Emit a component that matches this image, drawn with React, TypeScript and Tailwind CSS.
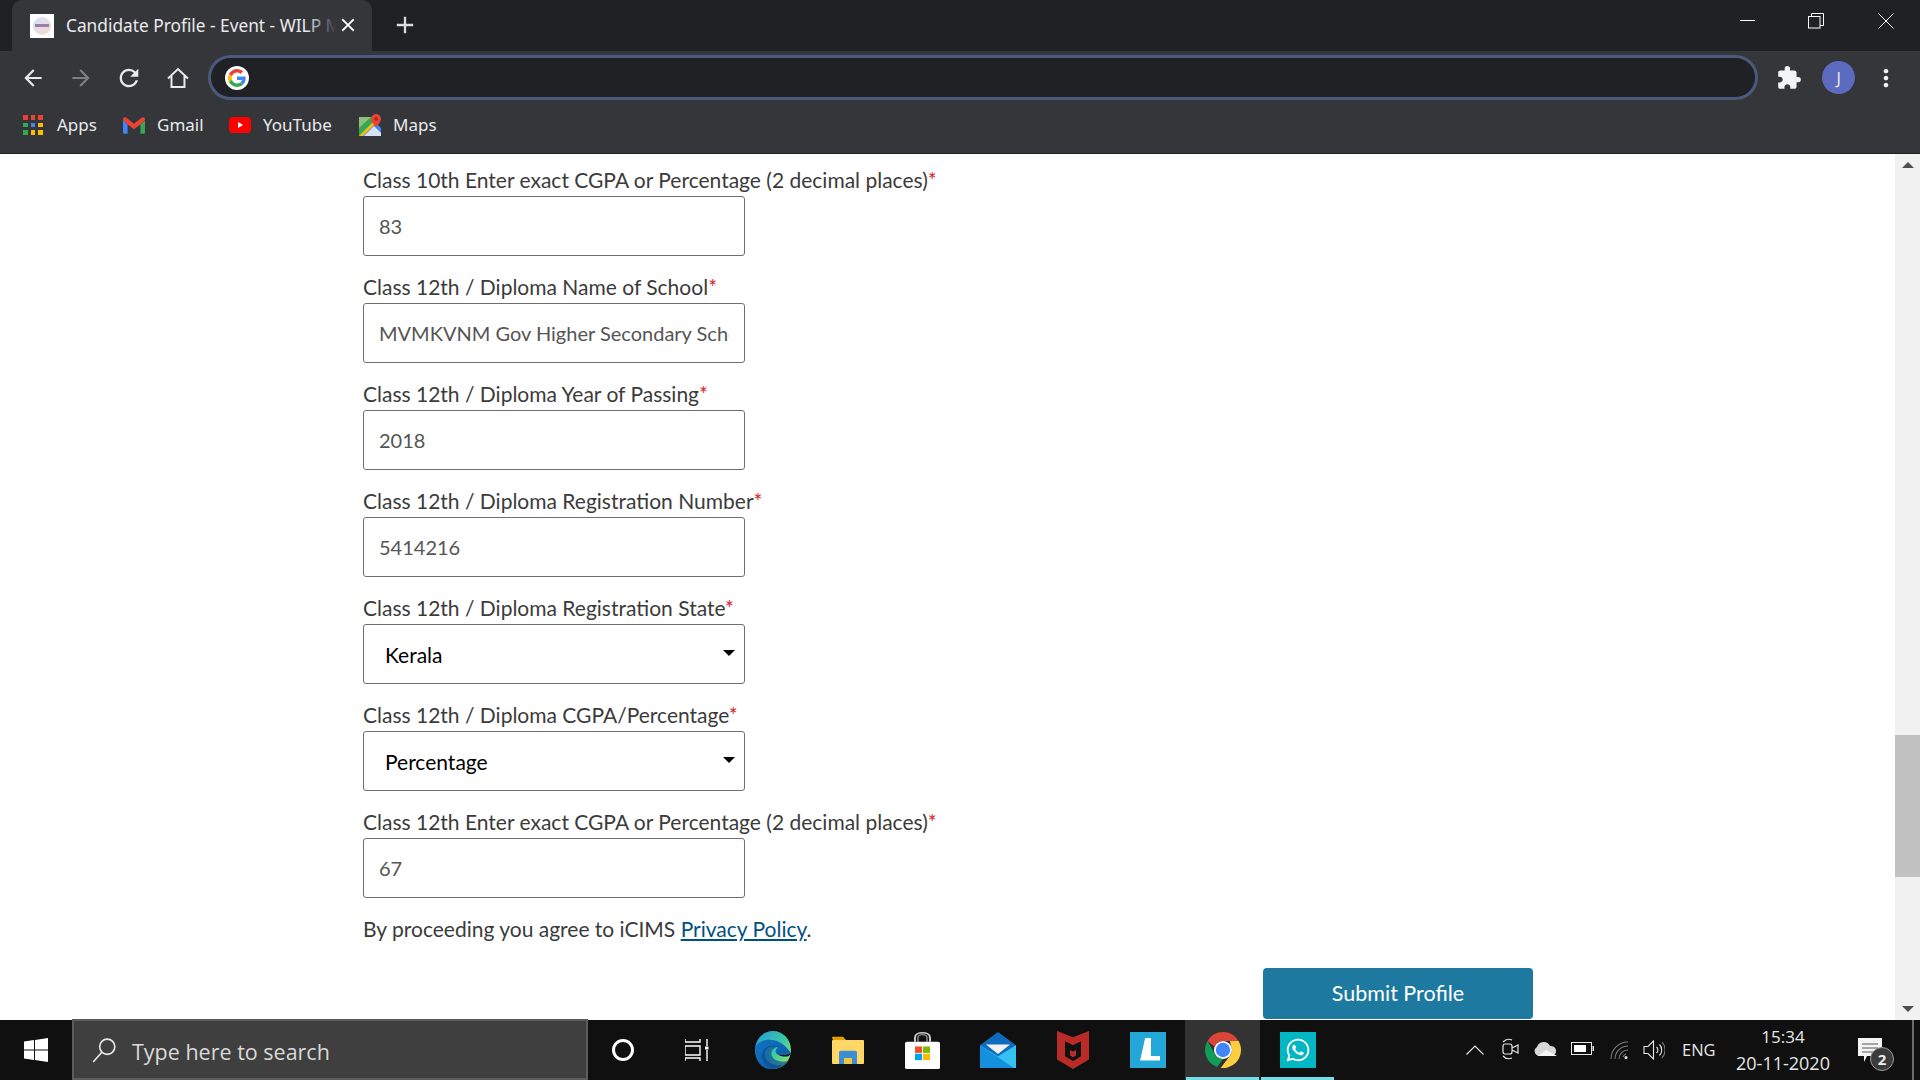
import React from "react";
import { MdArrowBack, MdArrowForward, MdRefresh, MdExtension, MdMoreVert, MdClose, MdAdd } from "react-icons/md";
import { FaWhatsapp } from "react-icons/fa";

const labelFont = "[font-family:Lato,'Liberation_Sans',sans-serif]";

function Google({ size }: { size: number }) {
  return (
    <span className="flex items-center justify-center rounded-full bg-white" style={{ width: size, height: size }}>
      <svg viewBox="0 0 48 48" width={size - 6} height={size - 6}>
        <path fill="#EA4335" d="M24 9.5c3.5 0 6.7 1.2 9.2 3.6l6.9-6.9C35.9 2.4 30.5 0 24 0 14.6 0 6.5 5.4 2.6 13.2l8 6.2C12.500 13.600 17.800 9.500 24 9.500z" />
        <path fill="#4285F4" d="M47 24.500c0-1.600-.1-3.100-.4-4.500H24v9h12.900c-.6 3-2.200 5.500-4.700 7.200l7.700 6C44.400 38.100 47 31.900 47 24.500z" />
        <path fill="#FBBC05" d="M10.500 28.600A14.500 14.500 0 0 1 10.500 19.400l-8-6.200A24 24 0 0 0 2.600 34.800l7.900-6.200z" />
        <path fill="#34A853" d="M24 48c6.500 0 11.900-2.100 15.900-5.800l-7.700-6c-2.100 1.400-4.900 2.300-8.200 2.300-6.200 0-11.500-4.100-13.500-9.900l-8 6.200C6.500 42.600 14.600 48 24 48z" />
      </svg>
    </span>
  );
}

function AppsIcon() {
  const colors = ["#ea4335", "#ea4335", "#ea4335", "#34a853", "#4285f4", "#fbbc05", "#34a853", "#fbbc05", "#fbbc05"];
  return (
    <span className="grid grid-cols-3 gap-[3px] w-[20px] h-[20px]">
      {colors.map((c, i) => (
        <span key={i} className="w-[4.5px] h-[4.5px]" style={{ background: c }} />
      ))}
    </span>
  );
}

function GmailIcon() {
  return (
    <svg viewBox="0 0 24 18" width="22" height="17">
      <path fill="#4285F4" d="M0 3v13.500A1.500 1.500 0 0 0 1.500 18H5V8z" />
      <path fill="#34A853" d="M24 3v13.500a1.500 1.500 0 0 1-1.500 1.500H19V8z" />
      <path fill="#EA4335" d="M0 2.500C0 .6 2.200-.6 3.700.6L12 7l8.300-6.400C21.800-.6 24 .6 24 2.500V3l-5 5-7 5.200L5 8 0 3z" />
    </svg>
  );
}

function YouTubeIcon() {
  return (
    <svg viewBox="0 0 22 16" width="22" height="16">
      <rect width="22" height="16" rx="4" fill="#ff0000" />
      <path d="M9 5l5 3-5 3z" fill="#fff" />
    </svg>
  );
}

function MapsIcon() {
  return (
    <svg viewBox="0 0 22 22" width="22" height="22">
      <path d="M0 3h15v19H0z" fill="#34a853" />
      <path d="M0 22L15 7l7 7v8z" fill="#4285f4" />
      <path d="M0 22L14 8l2 2L4 22z" fill="#fbbc05" />
      <path d="M3 3h9L0 14V3z" fill="#8fbf7f" />
      <path d="M5 22L15 12l7 7v3z" fill="#f1f3f4" opacity="0.85" />
      <path d="M17 0a5 5 0 0 0-5 5c0 3.500 5 8 5 8s5-4.500 5-8a5 5 0 0 0-5-5z" fill="#ea4335" />
      <circle cx="17" cy="5" r="1.800" fill="#a52714" />
    </svg>
  );
}

function ChromeIcon() {
  return (
    <svg viewBox="4 4 40 40" width="36" height="36">
      <path fill="#db4437" d="M24 4a20 20 0 0 1 17.300 10H24a10 10 0 0 0-9.300 6.300L6.700 14A20 20 0 0 1 24 4z" />
      <path fill="#0f9d58" d="M6.700 14l8.600 15A10 10 0 0 0 24 34l-6.600 8.900A20 20 0 0 1 6.700 14z" />
      <path fill="#ffcd40" d="M41.300 14A20 20 0 0 1 24 44h-2.500L32.700 29A10 10 0 0 0 32.700 19l-1-5z" />
      <circle cx="24" cy="24" r="10" fill="#fff" />
      <circle cx="24" cy="24" r="8" fill="#4285f4" />
    </svg>
  );
}

function EdgeIcon() {
  return (
    <svg viewBox="0 0 36 48" width="36" height="38" preserveAspectRatio="none">
      <defs>
        <linearGradient id="eg1" x1="0" y1="0" x2="1" y2="0.8">
          <stop offset="0" stopColor="#1f9ed8" />
          <stop offset="0.6" stopColor="#3bc6a8" />
          <stop offset="1" stopColor="#8fe36b" />
        </linearGradient>
        <linearGradient id="eg2" x1="0" y1="0" x2="1" y2="1">
          <stop offset="0" stopColor="#1172c4" />
          <stop offset="1" stopColor="#0c59a4" />
        </linearGradient>
      </defs>
      <ellipse cx="18" cy="24" rx="18" ry="24" fill="url(#eg1)" />
      <path d="M0 22C2 12 14 8 24 14c6 4 10 10 12 14-3 4-10 3-14 1-2-2-2-6 1-8-8-4-14 2-13 10 1 8 8 14 18 12-4 4-9 5-13 5C7 48 0 38 0 22z" fill="url(#eg2)" />
      <path d="M12 44c-5-5-7-14-3-21 3-5 10-6 14-3-5 1-8 7-6 12 2 6 9 8 17 6-4 6-10 10-15 10-3 0-5-2-7-4z" fill="#0d4d96" opacity="0.7" />
      <path d="M22 29c4 2 11 2 14-1-1 5-8 6-14 1z" fill="#101010" />
    </svg>
  );
}

function FolderIcon() {
  return (
    <svg viewBox="0 0 32 34" width="32" height="28" preserveAspectRatio="none">
      <path d="M0 2a1 1 0 0 1 1-1h10l3 4H1z" fill="#e0a100" />
      <rect x="0" y="5" width="32" height="29" rx="1" fill="#ffd766" />
      <path d="M7 34V20a2 2 0 0 1 2-2h14a2 2 0 0 1 2 2v14h-5v-7h-8v7z" fill="#3d8ed1" />
      <path d="M12 27h8v7h-8z" fill="#f4c542" />
    </svg>
  );
}

function StoreIcon() {
  return (
    <svg viewBox="0 0 35 46" width="35" height="37" preserveAspectRatio="none">
      <path d="M10 12V7c0-8 15-8 15 0v5" fill="none" stroke="#c9c9c9" strokeWidth="2" />
      <path d="M13 12V7c0-5 9-5 9 0v5" fill="none" stroke="#8a8a8a" strokeWidth="1.500" />
      <rect y="12" width="35" height="34" rx="2" fill="#fff" />
      <rect x="10" y="18" width="7" height="8" fill="#f25022" />
      <rect x="18" y="18" width="7" height="8" fill="#7fba00" />
      <rect x="10" y="27" width="7" height="8" fill="#00a4ef" />
      <rect x="18" y="27" width="7" height="8" fill="#ffb900" />
    </svg>
  );
}

function MailIcon() {
  return (
    <svg viewBox="0 0 36 46" width="36" height="36" preserveAspectRatio="none">
      <path d="M0 17L18 0l18 17v29H0z" fill="#0f6cbd" />
      <path d="M6 16h24l-12 12z" fill="#f1f1f1" />
      <path d="M0 17l18 14 18-14v29H18z" fill="#35c1f1" />
      <path d="M0 17v29h34z" fill="#1490df" />
    </svg>
  );
}

function McAfeeIcon() {
  return (
    <svg viewBox="0 0 32 48" width="32" height="38" preserveAspectRatio="none">
      <path d="M0 0l16 8 16-8v36l-16 12L0 36z" fill="#b92b27" />
      <path d="M8 13l8 5 8-5v19l-8 6-8-6z" fill="#101010" />
      <path d="M13 24l3 2 3-2v7l-3 2-3-2z" fill="#b92b27" />
    </svg>
  );
}

function LIcon() {
  return (
    <div className="w-[36px] h-[36px] bg-[#22a7d6] relative">
      <svg viewBox="0 0 36 48" width="36" height="36" preserveAspectRatio="none" className="absolute inset-0">
        <path d="M10 38l5-30v24z" fill="#0b2f66" />
        <path d="M15 8h6v24h9v6H10z" fill="#fff" />
      </svg>
    </div>
  );
}

function Label({ label }: { label: string }) {
  return (
    <div className={`h-[30px] leading-[28px] text-[21px] text-[#3b3b3b] ${labelFont}`}>
      {label}
      <span className="text-[#d8232a]">*</span>
    </div>
  );
}

function Field({ label, value }: { label: string; value: string }) {
  return (
    <div className="mb-[17px]">
      <Label label={label} />
      <input
        readOnly
        value={value}
        className={`block w-[382px] h-[60px] px-[15px] border border-[#6f6f6f] rounded-[3px] text-[20px] text-[#555] bg-white outline-none ${labelFont}`}
      />
    </div>
  );
}

function SelectField({ label, value }: { label: string; value: string }) {
  return (
    <div className="mb-[17px]">
      <Label label={label} />
      <div className="relative w-[382px] h-[60px]">
        <select
          defaultValue={value}
          className={`block w-full h-full pl-[21px] pt-[1px] border border-[#6f6f6f] rounded-[3px] text-[21px] text-black bg-white outline-none appearance-none ${labelFont}`}
        >
          <option>{value}</option>
        </select>
        <span className="absolute right-[10px] top-[26px] w-0 h-0 border-l-[6px] border-r-[6px] border-t-[6px] border-l-transparent border-r-transparent border-t-black" />
      </div>
    </div>
  );
}

function Bookmark({ icon, text, width }: { icon: React.ReactNode; text: string; width: string }) {
  return (
    <div className={`flex items-center ${width}`}>
      <span className="w-[34px] flex items-center">{icon}</span>
      <span className="text-[17px] text-[#e8eaed]">{text}</span>
    </div>
  );
}

export default function App() {
  const slots: React.ReactNode[] = [
    <span className="block w-[22px] h-[22px] rounded-full border-[3px] border-white" />,
    <svg viewBox="0 0 26 24" width="26" height="24" fill="none" stroke="#fff" strokeWidth="1.400">
      <path d="M0 1v3h15V1M0 8h15v9H0zM0 23v-3h15v3M22 1v7M22 12v11" />
      <rect x="20" y="8.500" width="3.500" height="3" fill="#fff" stroke="none" />
    </svg>,
    <EdgeIcon />,
    <FolderIcon />,
    <StoreIcon />,
    <MailIcon />,
    <McAfeeIcon />,
    <LIcon />,
    <ChromeIcon />,
    <div className="w-[36px] h-[36px] bg-[#00b7c3] flex items-center justify-center">
      <FaWhatsapp className="text-white text-[26px]" />
    </div>,
  ];

  return (
    <div className="w-[1920px] h-[1080px] overflow-hidden flex flex-col bg-white [font-family:'Noto_Sans','Open_Sans',sans-serif]">
      {/* tab strip */}
      <div className="h-[51px] bg-[#202124] flex shrink-0 pl-[12px]">
        <div className="w-[360px] h-full bg-[#35363a] rounded-t-[10px] flex items-center pl-[18px] relative">
          <span className="w-[24px] h-[24px] bg-white flex items-center justify-center">
            <span className="w-[18px] h-[18px] rounded-full bg-gradient-to-br from-[#c7e6ee] via-[#e9dcea] to-[#f1d9b8] flex items-center justify-center">
              <span className="w-[14px] h-[3px] bg-[#9a7fab]" />
            </span>
          </span>
          <span className="ml-[12px] w-[270px] overflow-hidden whitespace-nowrap text-[17.3px] text-[#e8eaed]">Candidate Profile - Event - WILP Mphasis</span>
          <span className="absolute right-[36px] top-0 w-[30px] h-full bg-gradient-to-r from-transparent to-[#35363a]" />
          <MdClose className="absolute right-[13px] top-[14px] text-white text-[22px]" />
        </div>
        <MdAdd className="ml-[19px] mt-[11px] text-[#dadce0] text-[28px]" />
        <div className="flex-1 relative">
          <div className="absolute right-0 top-0 flex h-[41px] text-white">
            <div className="w-[68px] flex items-center justify-center pb-[1px]">
              <span className="block w-[15px] h-px bg-white" />
            </div>
            <div className="w-[70px] flex items-center justify-center">
              <svg width="16" height="16" viewBox="0 0 16 16" fill="none" stroke="#fff">
                <rect x="0.500" y="3.500" width="11.500" height="11.500" />
                <path d="M3.500 3.500V.5h12v12h-3.500" />
              </svg>
            </div>
            <div className="w-[69px] flex items-center justify-center">
              <svg width="16" height="16" viewBox="0 0 16 16" stroke="#fff" strokeWidth="1">
                <path d="M.5.5l15 15M15.500.5l-15 15" />
              </svg>
            </div>
          </div>
        </div>
      </div>

      {/* toolbar */}
      <div className="h-[51px] bg-[#35363a] flex items-center shrink-0 pl-[20px] pr-[20px] pt-[2px]">
        <MdArrowBack className="text-[#e8eaed] text-[26px]" />
        <MdArrowForward className="text-[#7d7f83] text-[26px] ml-[22px]" />
        <MdRefresh className="text-[#e8eaed] text-[28px] ml-[21px]" />
        <svg viewBox="0 0 24 24" width="24" height="24" fill="none" stroke="#e8eaed" strokeWidth="2" className="ml-[23px]">
          <path d="M2 12.500L12 3l10 9.500M5.500 10v11h13V10" />
        </svg>
        <div className="ml-[18px] w-[1553px] h-[45px] rounded-full border-[3px] border-[#4a5a7a] bg-[#202124] flex items-center pl-[14px]">
          <Google size={24} />
        </div>
        <MdExtension className="ml-[18px] text-[#f1f3f4] text-[26px]" />
        <span className="ml-[20px] w-[33px] h-[33px] rounded-full bg-[#5c6bc0] flex items-center justify-center text-[#e8eaed] text-[16px]">J</span>
        <MdMoreVert className="ml-[17px] text-[#f1f3f4] text-[28px]" />
      </div>

      {/* bookmarks */}
      <div className="h-[52px] bg-[#35363a] border-b border-[#202124] flex items-center shrink-0 pl-[23px] pb-[5px] box-border">
        <Bookmark icon={<AppsIcon />} text="Apps" width="w-[100px]" />
        <Bookmark icon={<GmailIcon />} text="Gmail" width="w-[106px]" />
        <Bookmark icon={<YouTubeIcon />} text="YouTube" width="w-[130px]" />
        <Bookmark icon={<MapsIcon />} text="Maps" width="w-[100px]" />
      </div>

      {/* page */}
      <div className="flex-1 min-h-0 flex overflow-hidden">
        <div className="flex-1 pl-[363px] pt-[12px] overflow-hidden">
          <Field label="Class 10th Enter exact CGPA or Percentage (2 decimal places)" value="83" />
          <Field label="Class 12th / Diploma Name of School" value="MVMKVNM Gov Higher Secondary School" />
          <Field label="Class 12th / Diploma Year of Passing" value="2018" />
          <Field label="Class 12th / Diploma Registration Number" value="5414216" />
          <SelectField label="Class 12th / Diploma Registration State" value="Kerala" />
          <SelectField label="Class 12th / Diploma CGPA/Percentage" value="Percentage" />
          <Field label="Class 12th Enter exact CGPA or Percentage (2 decimal places)" value="67" />
          <p className={`text-[21px] text-[#3b3b3b] leading-[28px] ${labelFont}`}>
            By proceeding you agree to iCIMS{" "}
            <a className="text-[#00517f] underline">Privacy Policy</a>.
          </p>
          <div className="mt-[25px] ml-[900px] w-[270px] h-[51px] rounded-[4px] bg-[#1d79a0] text-white flex items-center justify-center">
            <span className={`text-[21.5px] ${labelFont}`}>Submit Profile</span>
          </div>
        </div>
        <div className="w-[25px] bg-[#f1f1f1] flex flex-col items-center relative">
          <span className="mt-[8px] w-0 h-0 border-l-[6px] border-r-[6px] border-b-[6px] border-l-transparent border-r-transparent border-b-[#505050]" />
          <span className="absolute left-0 right-0 top-[581px] h-[142px] bg-[#c1c1c1]" />
          <span className="absolute bottom-[8px] w-0 h-0 border-l-[6px] border-r-[6px] border-t-[6px] border-l-transparent border-r-transparent border-t-[#505050]" />
        </div>
      </div>

      {/* taskbar */}
      <div className="h-[60px] bg-[#101010] flex items-stretch shrink-0 text-white">
        <div className="w-[72px] flex items-center justify-center">
          <svg viewBox="0 0 24 24" width="24" height="24" fill="#fff">
            <path d="M0 3.400l10-1.400v9.500H0zM11 1.900L24 0v11.500H11zM0 12.500h10V22L0 20.600zM11 12.500h13V24l-13-1.900z" />
          </svg>
        </div>
        <div className="w-[516px] -mr-[3px] bg-[#3f3f3f] border-2 border-[#5d5d5d] flex items-center pl-[17px] -mt-px">
          <svg viewBox="0 0 24 24" width="26" height="26" fill="none" stroke="#e8e8e8" strokeWidth="1.500">
            <circle cx="15" cy="9" r="7" />
            <path d="M10 14L2 23" />
          </svg>
          <span className="ml-[15px] pt-[5px] text-[21.5px] text-[#d9d9d9] [font-family:'Open_Sans',sans-serif]">Type here to search</span>
        </div>
        {slots.map((s, i) => (
          <div
            key={i}
            className={`w-[75px] flex items-center justify-center relative ${i === 8 ? "bg-[#333333]" : ""}`}
          >
            {s}
            {i >= 8 && <span className="absolute bottom-0 left-[1px] right-[1px] h-[3px] bg-[#76dbe8]" />}
          </div>
        ))}
        <div className="flex-1 flex items-center relative">
          <svg className="absolute left-[131px] top-[25px]" viewBox="0 0 18 10" width="18" height="10" fill="none" stroke="#e6e6e6" strokeWidth="1.200"><path d="M.5 9.500L9 1l8.500 8.500" /></svg>
          <svg className="absolute left-[167px] top-[18px]" viewBox="0 0 17 22" width="17" height="22" fill="none" stroke="#e6e6e6" strokeWidth="1.200">
            <rect x="1" y="6" width="9" height="10" rx="2" />
            <path d="M10 10l6-3v8l-6-3M1 4a8 8 0 0 1 9-2M1 18a8 8 0 0 0 9 2" />
          </svg>
          <svg className="absolute left-[198px] top-[21px]" viewBox="0 0 24 15" width="24" height="15">
            <path d="M5 15a5 5 0 0 1-1-9 7 7 0 0 1 13-1 5 5 0 0 1 2 10z" fill="#d8d8d8" />
            <path d="M5 15l8-6 11 6z" fill="#f5f5f5" />
          </svg>
          <svg className="absolute left-[236px] top-[22px]" viewBox="0 0 23 13" width="23" height="13" fill="none">
            <rect x=".5" y=".5" width="20" height="12" stroke="#e6e6e6" />
            <rect x="3" y="3" width="12" height="7" fill="#fff" />
            <rect x="21.500" y="4" width="1.500" height="5" fill="#e6e6e6" />
          </svg>
          <svg className="absolute left-[275px] top-[21px]" viewBox="0 0 18 18" width="18" height="18" fill="none" stroke="#7d7d7d" strokeWidth="1.100">
            <path d="M1 18A17 17 0 0 1 18 1M5 18A13 13 0 0 1 18 5M9 18a9 9 0 0 1 9-9M13 16a5 5 0 0 1 3-3" />
            <circle cx="16" cy="16.500" r="1.500" fill="#e6e6e6" stroke="none" />
          </svg>
          <svg className="absolute left-[308px] top-[20px]" viewBox="0 0 22 20" width="22" height="20" fill="none" stroke="#e6e6e6" strokeWidth="1.100">
            <path d="M1 6.500h4L10.500 1v18L5 13.500H1z" />
            <path d="M13.500 7a4 4 0 0 1 0 6M16.500 4.500a8 8 0 0 1 0 11" />
            <path d="M19 2a12 12 0 0 1 0 16" stroke="#7d7d7d" />
          </svg>
          <span className="absolute left-[347px] top-[18px] text-[16.5px] leading-[24px] text-[#e6e6e6] [font-family:'Open_Sans',sans-serif]">ENG</span>
          <div className="absolute left-[393px] top-0 w-[110px] h-full text-center text-[#e6e6e6] leading-[27px] pt-[3px] [font-family:'Open_Sans',sans-serif]">
            <div className="text-[17px]">15:34</div>
            <div className="text-[18px]">20-11-2020</div>
          </div>
          <svg className="absolute left-[523px] top-[18px]" viewBox="0 0 24 24" width="24" height="24" fill="#f5f5f5">
            <path d="M0 0h24v18H9l-3 6v-6H0z" />
            <path d="M4 6h16M4 10h16M4 14h12" stroke="#555" strokeWidth="1" />
          </svg>
          <span className="absolute left-[535px] top-[27px] w-[24px] h-[24px] rounded-full bg-[#3b3b3b] border border-[#9a9a9a] flex items-center justify-center text-[15px] font-bold text-[#eee]">2</span>
          <span className="absolute right-[6px] top-0 w-[2px] h-full bg-[#6a6a6a]" />
        </div>
      </div>
    </div>
  );
}
